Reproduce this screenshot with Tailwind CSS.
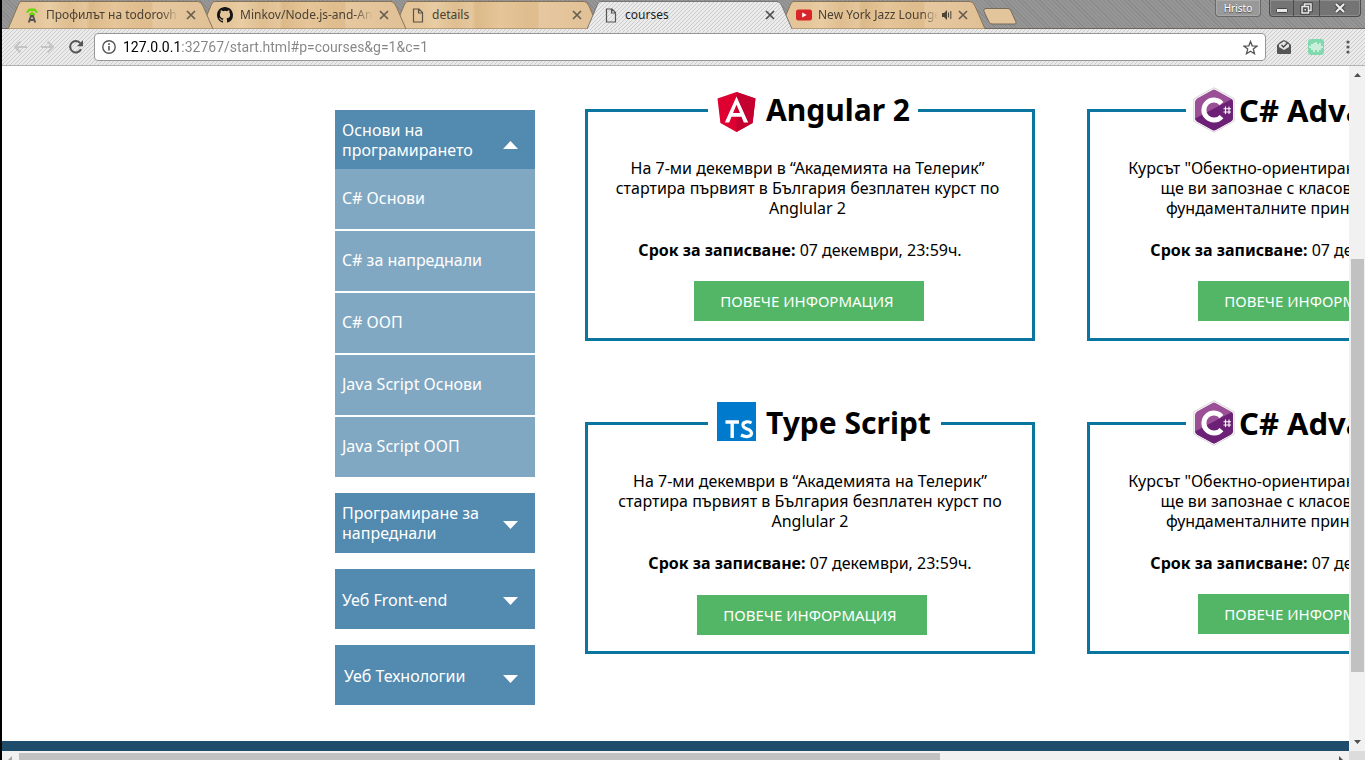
<!DOCTYPE html>
<html lang="bg">
<head>
<meta charset="utf-8">
<title>courses</title>
<script src="https://cdn.jsdelivr.net/npm/@tailwindcss/browser@4"></script>
</head>
<body class="flex h-screen flex-col overflow-hidden border-l-2 border-black bg-white font-['Noto_Sans','Open_Sans',sans-serif] text-black">
<svg class="absolute h-0 w-0" aria-hidden="true">
  <defs>
    <linearGradient id="wood" x1="0" x2="1" y1="0" y2="0">
      <stop offset="0" stop-color="#e5c79d"/><stop offset=".12" stop-color="#e4c498"/><stop offset=".2" stop-color="#e8cca3"/><stop offset=".3" stop-color="#dfbe90"/><stop offset=".38" stop-color="#e5c79d"/><stop offset=".4" stop-color="#dcb988"/><stop offset=".52" stop-color="#e5c599"/><stop offset=".65" stop-color="#dfbd8e"/><stop offset=".7" stop-color="#dfbd8e"/><stop offset=".71" stop-color="#e6c8a0"/><stop offset="1" stop-color="#e0c095"/>
    </linearGradient>
    <pattern id="hatch" width="4" height="4" patternUnits="userSpaceOnUse">
      <rect width="4" height="4" fill="#ebebeb"/><path d="M-1 1 1-1M0 4 4 0M3 5 5 3" stroke="#cbcbcb" stroke-width="1"/>
    </pattern>
    <symbol id="tab" viewBox="0 0 206 28" preserveAspectRatio="none">
      <path d="M0 28 9 7Q11 .5 14 .5H190Q193 .5 195 5L205 28Z"/>
    </symbol>
    <symbol id="x" viewBox="0 0 10 10"><path d="M1 1 9 9M9 1 1 9" fill="none" stroke="currentColor" stroke-width="1.7"/></symbol>
    <symbol id="page" viewBox="0 0 12 15"><path d="M1.5 1H7l3.5 3.5V14h-9ZM6.5 1v4h4" fill="none" stroke="currentColor" stroke-width="1.2"/></symbol>
    <symbol id="csharp" viewBox="0 0 42 46">
      <path d="M21 .7 41.2 11.8V34.2L21 45.3.8 34.2V11.8Z" fill="#fff" stroke="#ccc" stroke-width=".8"/>
      <path d="M19 3.2Q21 2 23 3.2L38 11.5Q40 13 40 15V31Q40 33 38 34.5L23 42.8Q21 44 19 42.8L4 34.5Q2 33 2 31V15Q2 13 4 11.5Z" fill="#9a4f96"/>
      <path d="M2 31.500 39 12Q40 13.500 40 15V31Q40 33 38 34.500L23 42.800Q21 44 19 42.800L4 34.500Q2.500 33.500 2 31.500Z" fill="#6c2176"/>
      <path d="M28.500 16.500A10 10 0 1 0 28.500 29.500" fill="none" stroke="#fff" stroke-width="5"/>
      <path d="M32.500 19.500V27M36 19.500V27M30.500 21.700H38M30.500 25H38" stroke="#fff" stroke-width="1.100"/>
    </symbol>
  </defs>
</svg>

<header class="shrink-0">
  <div class="flex h-[29px] justify-between border-b border-[#6f665c] bg-[#919191] bg-[repeating-linear-gradient(45deg,#8b8b8b_0_1px,#969696_1px_3px)]">
    <nav class="flex pl-[6px] pt-px text-[12px] text-[#4b4134]" aria-label="Раздели">
      <div class="relative z-[5] flex h-7 w-[206px] shrink-0 items-center">
        <svg class="absolute inset-0 h-7 w-full" fill="url(#wood)" stroke="#8a7458"><use href="#tab"/></svg>
        <svg class="relative ml-[17px] h-4 w-3.5 shrink-0" viewBox="0 0 14 16"><path d="M1 5 4 1.500H10L13 5 11 6 9.500 4H4.500L3 6Z" fill="#6ad60c"/><path d="M3.500 7.500 7 4.500 10.500 7.500 9 8.500H5Z" fill="#6ad60c"/><path d="M3.800 15.500 6 9H8L10.200 15.500M5 13h4" fill="none" stroke="#555" stroke-width="1.900"/></svg>
        <a href="#profile" class="relative ml-[7px] w-[132px] overflow-hidden whitespace-nowrap [mask-image:linear-gradient(90deg,#000_116px,transparent)]">Профилът на todorovh -</a>
        <button class="relative ml-2 text-[#675d4f]" aria-label="Затвори"><svg class="h-2.5 w-2.5"><use href="#x"/></svg></button>
      </div>
      <div class="relative z-[4] -ml-[13px] flex h-7 w-[206px] shrink-0 items-center">
        <svg class="absolute inset-0 h-7 w-full" fill="url(#wood)" stroke="#8a7458"><use href="#tab"/></svg>
        <svg class="relative ml-4 h-4 w-4 shrink-0" viewBox="0 0 16 16" fill="#151515"><path d="M8 0C3.580 0 0 3.580 0 8c0 3.540 2.290 6.530 5.470 7.590.4.070.55-.17.55-.38 0-.19-.01-.82-.01-1.490-2.010.37-2.530-.49-2.690-.94-.09-.23-.48-.94-.82-1.130-.28-.15-.68-.52-.01-.53.63-.01 1.080.58 1.230.82.72 1.210 1.870.87 2.330.66.07-.52.28-.87.51-1.070-1.780-.2-3.640-.89-3.640-3.950 0-.87.31-1.590.82-2.150-.08-.2-.36-1.020.08-2.120 0 0 .67-.21 2.200.82a7.600 7.600 0 0 1 4 0c1.530-1.040 2.200-.82 2.200-.82.44 1.100.16 1.920.08 2.120.51.56.82 1.270.82 2.150 0 3.070-1.870 3.750-3.650 3.950.29.25.54.73.54 1.480 0 1.070-.01 1.930-.01 2.200 0 .21.15.46.55.38A8 8 0 0 0 16 8c0-4.420-3.580-8-8-8"/></svg>
        <a href="#github" class="relative ml-[7px] w-[133px] overflow-hidden whitespace-nowrap [mask-image:linear-gradient(90deg,#000_114px,transparent)]">Minkov/Node.js-and-Angular</a>
        <button class="relative ml-1.5 text-[#675d4f]" aria-label="Затвори"><svg class="h-2.5 w-2.5"><use href="#x"/></svg></button>
      </div>
      <div class="relative z-[3] -ml-[13px] flex h-7 w-[206px] shrink-0 items-center">
        <svg class="absolute inset-0 h-7 w-full" fill="url(#wood)" stroke="#8a7458"><use href="#tab"/></svg>
        <svg class="relative ml-[18px] h-[15px] w-3 shrink-0 text-[#5c5349]"><use href="#page"/></svg>
        <a href="#details" class="relative ml-2 w-[132px] overflow-hidden whitespace-nowrap">details</a>
        <button class="relative ml-2 text-[#675d4f]" aria-label="Затвори"><svg class="h-2.5 w-2.5"><use href="#x"/></svg></button>
      </div>
      <div class="relative z-[6] -ml-[13px] flex h-7 w-[206px] shrink-0 items-center text-[#1c1c1c]">
        <svg class="absolute inset-0 h-[29px] w-full" viewBox="0 0 206 29" preserveAspectRatio="none" fill="url(#hatch)"><path d="M0 29V28L9 7Q11 .5 14 .5H190Q193 .5 195 5L205 28V29"/><path d="M0 28 9 7Q11 .5 14 .5H190Q193 .5 195 5L205 28" fill="none" stroke="#77777a"/></svg>
        <svg class="relative ml-[18px] h-[15px] w-3 shrink-0 text-[#555]"><use href="#page"/></svg>
        <a href="#p=courses" aria-current="page" class="relative ml-2 w-[132px] overflow-hidden whitespace-nowrap">courses</a>
        <button class="relative ml-2 text-[#4d4d4d]" aria-label="Затвори"><svg class="h-2.5 w-2.5"><use href="#x"/></svg></button>
      </div>
      <div class="relative z-[2] -ml-[13px] flex h-7 w-[206px] shrink-0 items-center">
        <svg class="absolute inset-0 h-7 w-full" fill="url(#wood)" stroke="#8a7458"><use href="#tab"/></svg>
        <svg class="relative ml-4 h-3 w-4 shrink-0" viewBox="0 0 16 12"><rect y=".5" width="16" height="11" rx="2.500" fill="#d9252a"/><path d="M6.200 3.500 10.700 6 6.200 8.500Z" fill="#fff"/></svg>
        <a href="#jazz" class="relative ml-1.5 w-[120px] overflow-hidden whitespace-nowrap [mask-image:linear-gradient(90deg,#000_104px,transparent)]">New York Jazz Lounge</a>
        <button class="relative ml-1 text-[#4c4437]" aria-label="Изключи звука"><svg class="h-2.5 w-2.5" viewBox="0 0 10 10"><path d="M0 3h2l3-3v10L2 7H0Z" fill="currentColor"/><path d="M6.500 2.500v5M8.800 1v8" stroke="currentColor"/></svg></button>
        <button class="relative ml-1.5 text-[#675d4f]" aria-label="Затвори"><svg class="h-2.5 w-2.5"><use href="#x"/></svg></button>
      </div>
      <button class="-ml-[3px] mt-1.5 h-[18px]" aria-label="Нов раздел"><svg class="h-[17px] w-[34px]" viewBox="0 0 34 17"><path d="M3 .5H25Q27 .5 28 3L33 14Q33.500 16 32 16H9Q7 16 6 14L.8 3Q.3.5 3 .5Z" fill="#e3c59b" stroke="#756a5c"/></svg></button>
    </nav>
    <div class="flex h-[17px] items-stretch gap-2 pr-1">
      <button class="h-[17px] w-[46px] rounded-b border border-t-0 border-[#6a6a6a] bg-[#999] text-[10px] leading-4 text-white shadow-[inset_0_0_0_1px_#a9a9a9] [text-shadow:0_1px_1px_#444]">Hristo</button>
      <div class="flex overflow-hidden rounded-b border border-t-0 border-[#4c4c4c] bg-[#747474] shadow-[inset_0_0_0_1px_#8c8c8c]">
        <button class="grid w-6 place-items-center border-r border-[#4c4c4c]" aria-label="Минимизирай"><svg class="h-3 w-3" viewBox="0 0 12 12"><rect x=".5" y="6.500" width="11" height="4" rx="1" fill="#e8e8e8" stroke="#444"/></svg></button>
        <button class="grid w-[26px] place-items-center border-r border-[#4c4c4c]" aria-label="Възстанови"><svg class="h-[13px] w-[13px]" viewBox="0 0 13 13" fill="none"><path d="M4.500 2h6.500v6.500H4.500Z" stroke="#444" stroke-width="3.500"/><path d="M2 4.500h6.500V11H2Z" stroke="#444" stroke-width="3.500"/><path d="M4.500 2h6.500v6.500H4.500Z" stroke="#e8e8e8" stroke-width="1.500"/><path d="M2 4.500h6.500V11H2Z" fill="#555" stroke="#e8e8e8" stroke-width="1.500"/><path d="M4.500 7h1.500v1.500H4.500Z" fill="#e8e8e8"/></svg></button>
        <button class="grid w-10 place-items-center" aria-label="Затвори прозореца"><svg class="h-3 w-3" viewBox="0 0 12 12"><path d="M2 2 10 10M10 2 2 10" stroke="#444" stroke-width="4.200"/><path d="M2 2 10 10M10 2 2 10" stroke="#eee" stroke-width="2.200"/></svg></button>
      </div>
    </div>
  </div>

  <div class="relative flex h-[37px] items-center border-b border-[#b2b2b2]">
    <svg class="absolute inset-0 h-full w-full" aria-hidden="true"><rect width="100%" height="100%" fill="url(#hatch)"/></svg>
    <button class="relative ml-[11px] text-[#c4c4c4]" aria-label="Назад"><svg class="h-3.5 w-3.5" viewBox="0 0 14 14" fill="none" stroke="currentColor" stroke-width="1.800"><path d="M14 7H2M7.500 1.500 2 7l5.500 5.500"/></svg></button>
    <button class="relative ml-3.5 text-[#c4c4c4]" aria-label="Напред"><svg class="h-3.5 w-3.5" viewBox="0 0 14 14" fill="none" stroke="currentColor" stroke-width="1.800"><path d="M0 7H12M6.500 1.500 12 7l-5.500 5.500"/></svg></button>
    <button class="relative ml-3.5 text-[#555]" aria-label="Презареди"><svg class="h-3.5 w-3.5" viewBox="0 0 14 14"><path d="M12 9.200A5.700 5.700 0 1 1 11.300 3.200" fill="none" stroke="currentColor" stroke-width="2"/><path d="M14 .3V6.300H8Z" fill="currentColor"/></svg></button>
    <div class="relative ml-[11px] flex h-7 min-w-0 flex-1 items-center rounded-sm border border-[#979797] bg-white pl-[7px] pr-[7px]">
      <svg class="h-3.5 w-3.5 shrink-0" viewBox="0 0 14 14"><circle cx="7" cy="7" r="6.200" fill="none" stroke="#555" stroke-width="1.400"/><path d="M7 6v4.500M7 3.300v1.600" stroke="#555" stroke-width="1.600"/></svg>
      <input type="text" aria-label="Адрес" value="127.0.0.1:32767/start.html#p=courses&amp;g=1&amp;c=1" class="ml-[7px] h-6 min-w-0 flex-1 bg-[linear-gradient(90deg,#000_57px,#858585_57px)] bg-clip-text font-['Roboto',sans-serif] text-[14px] text-transparent outline-none">
      <button class="text-[#555]" aria-label="Отметка"><svg class="h-[15px] w-[15px]" viewBox="0 0 15 15"><path d="M7.500 1.500 9.200 5.800 14 6.100 10.300 9.100 11.500 13.700 7.500 11.200 3.500 13.700 4.700 9.100 1 6.100 5.800 5.800Z" fill="none" stroke="currentColor" stroke-width="1.300"/></svg></button>
    </div>
    <button class="relative ml-[11px]" aria-label="Входяща поща"><svg class="h-3.5 w-3.5" viewBox="0 0 14 14"><path d="M0 5 3 2 7 0l4 2 3 3v8q0 1-1 1H1q-1 0-1-1Z" fill="#555"/><path d="M2 4.500 7 1.200 12 4.500V7L7 10 2 7Z" fill="#e4e4e4"/><path d="M4.500 5 6.500 7 10.500 3" fill="none" stroke="#444" stroke-width="1.300"/></svg></button>
    <button class="relative ml-[17px]" aria-label="Звук"><svg class="h-4 w-4" viewBox="0 0 16 16"><rect width="16" height="16" rx="3" fill="#83d9ae"/><path d="M2 7v2M4 5v6M6 4v9M8 3v8M10 5v8M12 4v7M14 7v2" stroke="#effbf5" stroke-width="1.300"/></svg></button>
    <button class="relative ml-[22px] mr-[15px]" aria-label="Меню"><svg class="h-3.5 w-1" viewBox="0 0 4 14" fill="#555"><circle cx="2" cy="2" r="1.600"/><circle cx="2" cy="7" r="1.600"/><circle cx="2" cy="12" r="1.600"/></svg></button>
  </div>
</header>

<div class="flex min-h-0 flex-1">
  <div class="flex min-w-0 flex-1 flex-col overflow-hidden">
    <main class="flex flex-1 items-start gap-[50px] pl-[333px] pt-[43px] text-[16px] leading-5">
      <aside class="mt-px flex w-[200px] shrink-0 flex-col gap-4 text-white">
        <section>
          <button aria-expanded="true" class="flex h-[59px] w-full items-center justify-between bg-[#528ab0] pl-[7px] pr-[17px] text-left">Основи на<br>програмирането <svg class="mt-2.5 h-2 w-[15px] shrink-0" viewBox="0 0 15 8" fill="#fff"><path d="M0 8 7.500 0 15 8Z"/></svg></button>
          <ul class="flex flex-col gap-0.5">
            <li><a href="#c1" class="flex h-[60px] items-center bg-[#81a8c3] pb-0.5 pl-[7px]">C# Основи</a></li>
            <li><a href="#c2" class="flex h-[60px] items-center bg-[#81a8c3] pb-0.5 pl-[7px]">C# за напреднали</a></li>
            <li><a href="#c3" class="flex h-[60px] items-center bg-[#81a8c3] pb-0.5 pl-[7px]">C# ООП</a></li>
            <li><a href="#c4" class="flex h-[60px] items-center bg-[#81a8c3] pb-0.5 pl-[7px]">Java Script Основи</a></li>
            <li><a href="#c5" class="flex h-[60px] items-center bg-[#81a8c3] pb-0.5 pl-[7px]">Java Script ООП</a></li>
          </ul>
        </section>
        <button class="flex h-[60px] w-full items-center justify-between bg-[#528ab0] pl-[7px] pr-[17px] text-left"><span>Програмиране за<br>напреднали</span><svg class="mt-1 h-2 w-[15px] shrink-0" viewBox="0 0 15 8" fill="#fff"><path d="M0 0H15L7.500 8Z"/></svg></button>
        <button class="flex h-[60px] w-full items-center justify-between bg-[#528ab0] pl-[7px] pr-[17px] pt-0.5 text-left">Уеб Front-end<svg class="mt-0.5 h-2 w-[15px] shrink-0" viewBox="0 0 15 8" fill="#fff"><path d="M0 0H15L7.500 8Z"/></svg></button>
        <button class="flex h-[60px] w-full items-center justify-between bg-[#528ab0] pl-[9px] pr-[17px] pt-0.5 text-left">Уеб Технологии<svg class="mt-1.5 h-2 w-[15px] shrink-0" viewBox="0 0 15 8" fill="#fff"><path d="M0 0H15L7.500 8Z"/></svg></button>
      </aside>

      <div class="grid shrink-0 grid-cols-[450px_450px] gap-x-[52px] gap-y-[81px] text-center">
        <article class="h-[232px] border-3 border-[#0a759e]">
          <h2 class="-mt-[25px] ml-[120px] flex h-[46px] w-fit items-center gap-2.5 bg-white pl-[9px] pr-2 text-[30px] font-bold">
            <svg class="mt-1 h-10 w-[39px]" viewBox="0 0 39 40"><path d="M19.500 0 38.500 6.500 35.600 31 19.500 40 3.400 31 .5 6.500Z" fill="#dd0031"/><path d="M19.500 0 38.500 6.500 35.600 31 19.500 40Z" fill="#c3002f"/><path d="M19.500 4.500 7.800 30.500h4.400l2.300-5.800h10l2.300 5.800h4.400ZM19.500 12.800l3.500 8.200h-7Z" fill="#fff" fill-rule="evenodd"/></svg>Angular 2</h2>
          <p class="mt-[25px] pr-[5px]">На 7-ми декември в “Академията на Телерик”<br>стартира първият в България безплатен курст по<br>Anglular 2</p>
          <p class="mt-[22px] pr-5"><strong>Срок за записване:</strong> 07 декември, 23:59ч.</p>
          <button class="mr-0.5 mt-[21px] h-10 w-[230px] bg-[#53b666] pr-1 text-[15px] text-white">ПОВЕЧЕ ИНФОРМАЦИЯ</button>
        </article>
        <article class="h-[232px] border-3 border-[#0a759e]">
          <h2 class="-mt-[25px] ml-[96px] flex h-[46px] w-fit items-center gap-1 bg-white pl-[7px] pr-1.5 text-[31px] font-bold">
            <svg class="h-[46px] w-[42px]"><use href="#csharp"/></svg>C# Advanced</h2>
          <p class="mt-[25px] pr-1.5">Курсът "Обектно-ориентирано програмиране"<br>ще ви запознае с класове, обекти и за<br>фундаменталните принципи на ООП</p>
          <p class="mt-[22px]"><strong>Срок за записване:</strong> 07 декември, 23:59ч.</p>
          <button class="ml-0.5 mt-[21px] h-10 w-[230px] bg-[#53b666] pr-1 text-[15px] text-white">ПОВЕЧЕ ИНФОРМАЦИЯ</button>
        </article>
        <article class="h-[232px] border-3 border-[#0a759e]">
          <h2 class="-mt-[25px] ml-[120px] flex h-[46px] w-fit items-center gap-2.5 bg-white pl-[9px] pr-2.5 text-[30px] font-bold">
            <svg class="mb-1 h-[39px] w-[39px]" viewBox="0 0 39 39"><rect width="39" height="39" fill="#007acc"/><path d="M8.500 20H22M15.200 20V36" fill="none" stroke="#fff" stroke-width="3.400"/><path d="M34.500 21Q32 19.500 29.500 19.800 25.500 20.500 26 23.500 26.500 25.800 30 27 34.500 28.500 34.500 31.500 34 34.500 30 34.600 27 34.700 24 33" fill="none" stroke="#fff" stroke-width="3.200"/></svg>Type Script</h2>
          <p class="mt-[25px]">На 7-ми декември в “Академията на Телерик”<br>стартира първият в България безплатен курст по<br>Anglular 2</p>
          <p class="mt-[22px]"><strong>Срок за записване:</strong> 07 декември, 23:59ч.</p>
          <button class="ml-1 mt-[22px] h-10 w-[230px] bg-[#53b666] pr-1 text-[15px] text-white">ПОВЕЧЕ ИНФОРМАЦИЯ</button>
        </article>
        <article class="h-[232px] border-3 border-[#0a759e]">
          <h2 class="-mt-[25px] ml-[96px] flex h-[46px] w-fit items-center gap-1 bg-white pl-[7px] pr-1.5 text-[31px] font-bold">
            <svg class="h-[46px] w-[42px]"><use href="#csharp"/></svg>C# Advanced</h2>
          <p class="mt-[25px] pr-1.5">Курсът "Обектно-ориентирано програмиране"<br>ще ви запознае с класове, обекти и за<br>фундаменталните принципи на ООП</p>
          <p class="mt-[22px]"><strong>Срок за записване:</strong> 07 декември, 23:59ч.</p>
          <button class="ml-0.5 mt-[21px] h-10 w-[230px] bg-[#53b666] pr-1 text-[15px] text-white">ПОВЕЧЕ ИНФОРМАЦИЯ</button>
        </article>
      </div>
    </main>
    <footer class="h-2.5 shrink-0 bg-[#1f4c6a]"></footer>
  </div>
  <div class="flex w-4 shrink-0 flex-col items-center bg-[#f1f1f1]" aria-hidden="true">
    <svg class="mt-[7px] h-1 w-[7px]" viewBox="0 0 7 4" fill="#505050"><path d="M0 4 3.500 0 7 4Z"/></svg>
    <div class="mt-[182px] h-[413px] w-[13px] bg-[#c1c1c1]"></div>
    <svg class="mb-[7px] mt-auto h-1 w-[7px]" viewBox="0 0 7 4" fill="#505050"><path d="M0 0H7L3.500 4Z"/></svg>
  </div>
</div>
<div class="flex h-[9px] shrink-0 bg-[#f1f1f1]" aria-hidden="true">
  <svg class="ml-1.5 mt-[5px] h-1 w-1" viewBox="0 0 4 4" fill="#a3a3a3"><path d="M4 0V4H0Z"/></svg>
  <div class="ml-[7px] mt-0.5 w-[921px] bg-[#c1c1c1]"></div>
  <svg class="ml-auto mr-1.5 mt-[5px] h-1 w-1" viewBox="0 0 4 4" fill="#505050"><path d="M0 0V4H4Z"/></svg>
  <div class="w-4 bg-[#dcdcdc]"></div>
</div>
</body>
</html>
